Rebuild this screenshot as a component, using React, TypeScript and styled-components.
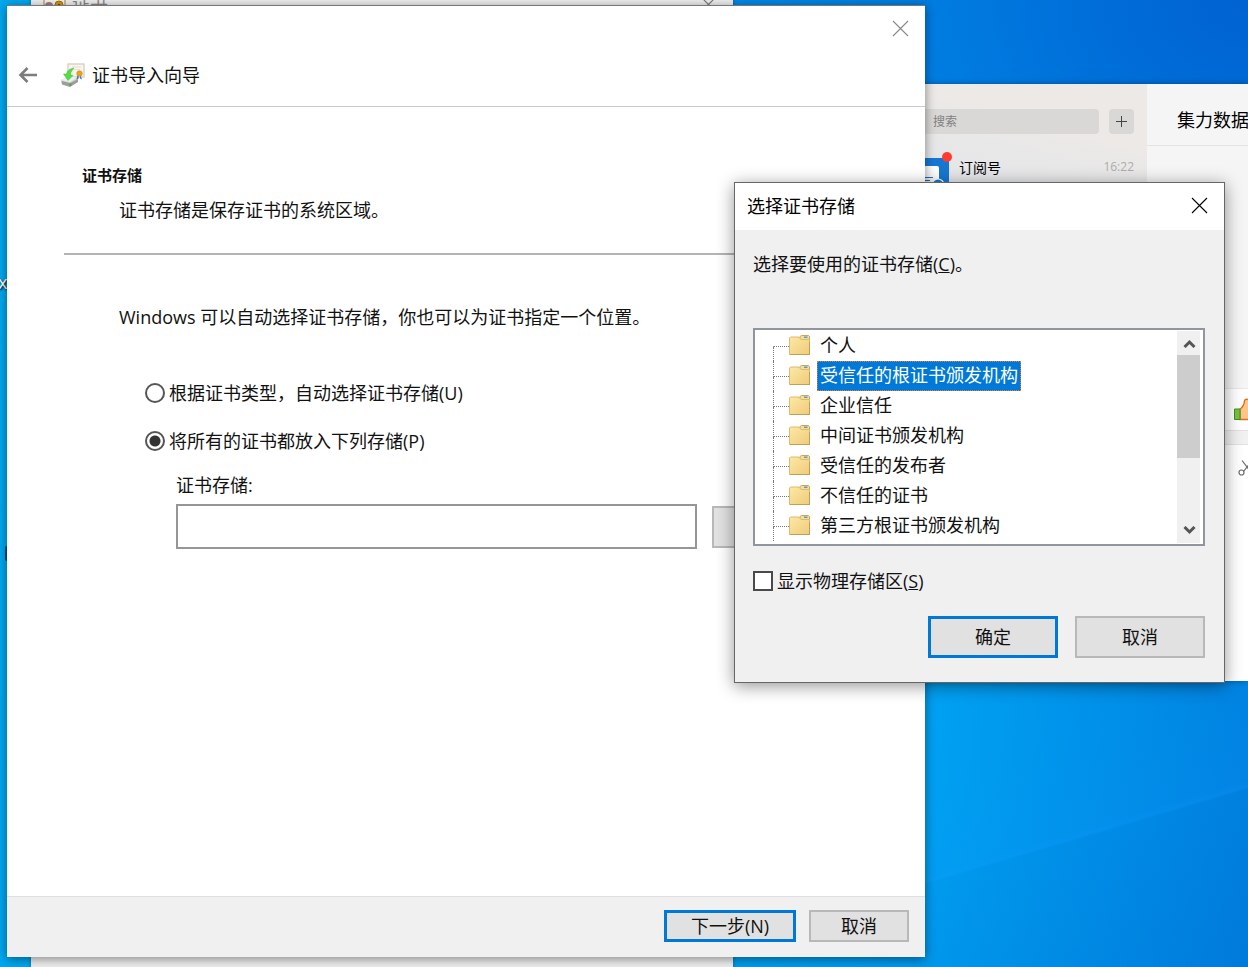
import React, { useState } from "react";
import styled, { createGlobalStyle } from "styled-components";

const GlobalStyle = createGlobalStyle`
  *, *::before, *::after { box-sizing: border-box; }
  body { margin: 0; overflow: hidden; }
  svg { flex: none; }
  body, button, input {
    font-family: "Open Sans", "Noto Sans CJK SC", sans-serif;
    font-size: 18px;
    line-height: 24px;
    color: #111;
  }
`;

/* ---------- shared parts ---------- */

const Desktop = styled.main`
  position: relative;
  min-height: 100vh;
  overflow: hidden;
  background:
    linear-gradient(163.5deg, transparent 0 80%, rgba(20, 145, 250, 0.1) 86%, rgba(20, 150, 255, 0.25) 86.5%, rgba(0, 100, 200, 0.08) 86.7%, rgba(0, 90, 190, 0.16) 100%),
    radial-gradient(ellipse 900px 600px at 100% 0%, rgba(0, 94, 206, 0.9) 0, rgba(0, 104, 216, 0.6) 40%, rgba(0, 110, 220, 0) 100%),
    linear-gradient(96deg, #00a8f0 0%, #00a4f2 60%, #00a0f2 75%, #0080e0 100%);
`;

const IconButton = styled.button<{ $size?: number }>`
  display: flex;
  align-items: center;
  justify-content: center;
  width: ${(p) => p.$size ?? 24}px;
  height: ${(p) => p.$size ?? 24}px;
  padding: 0;
  border: 0;
  background: none;
`;

const PushButton = styled.button<{ $primary?: boolean; $width: number; $tall?: boolean }>`
  flex: none;
  width: ${(p) => p.$width}px;
  height: ${(p) => (p.$tall ? 42 : 32)}px;
  padding: 0 0 1px;
  border: ${(p) => (p.$primary ? "3px solid #0078d7" : "2px solid #b8b8b8")};
  background: #e1e1e1;
`;

/* ---------- window behind the wizard ---------- */

const BackWindow = styled.section`
  position: absolute;
  top: -24px;
  bottom: -24px;
  left: 31px;
  right: 515px;
  display: flex;
  flex-direction: column;
  background: #efefef;
  box-shadow: 0 0 4px rgba(0, 0, 0, 0.3);
`;

const BackTitle = styled.header`
  display: flex;
  align-items: center;
  gap: 5px;
  height: 48px;
  padding: 8px 16px 0 12px;
  color: #888;
`;

const Grow = styled.span`
  flex: 1;
`;

/* ---------- chat window ---------- */

const ChatWindow = styled.section`
  position: absolute;
  top: 84px;
  left: calc(100% - 388px);
  right: 0;
  height: 597px;
  display: flex;
  box-shadow: 0 0 6px rgba(0, 0, 0, 0.35);
`;

const ChatList = styled.div`
  flex: none;
  width: 287px;
  padding: 25px 13px 0 12px;
  background: linear-gradient(15deg, #e4e6e9 0 78%, #ece9e7 90%);
`;

const SearchRow = styled.div`
  display: flex;
  gap: 10px;
`;

const SearchBox = styled.label`
  flex: 1;
  display: flex;
  align-items: center;
  gap: 8px;
  min-width: 0;
  height: 25px;
  padding-left: 39px;
  border-radius: 4px;
  background: #dad8d7;
`;

const SearchInput = styled.input`
  flex: 1;
  min-width: 0;
  padding: 0;
  border: 0;
  background: none;
  font-size: 12px;
  outline: 0;
  &::placeholder { color: #808080; opacity: 1; }
`;

const AddButton = styled(IconButton)`
  border-radius: 4px;
  background: #dad8d7;
`;

const ChatItem = styled.div`
  display: flex;
  align-items: flex-start;
  gap: 10px;
  margin-top: 24px;
  padding-left: 37px;
`;

const Avatar = styled.span`
  position: relative;
  width: 40px;
  height: 40px;
  background: #1677d3;
`;

const Badge = styled.i`
  position: absolute;
  top: -6px;
  right: -3px;
  width: 10px;
  height: 10px;
  border-radius: 50%;
  background: #ff3b30;
`;

const ChatName = styled.span`
  flex: 1;
  font-size: 14px;
  line-height: 20px;
  color: #000;
`;

const ChatTime = styled.time`
  font-size: 12px;
  line-height: 18px;
  color: #acacac;
`;

const ChatPane = styled.div`
  flex: 1;
  display: flex;
  flex-direction: column;
  min-width: 0;
  overflow: hidden;
  background: #f5f5f5;
`;

const ChatTitle = styled.h2`
  margin: 0;
  height: 62px;
  padding: 24px 0 0 30px;
  border-bottom: 1px solid #e3e3e3;
  font-size: 18px;
  line-height: 24px;
  font-weight: 400;
  white-space: nowrap;
  color: #000;
`;

const Messages = styled.div`
  height: 243px;
  border-bottom: 1px solid #e8e8e8;
`;

const EmojiBar = styled.div`
  display: flex;
  align-items: center;
  height: 41px;
  padding-left: 87px;
  background: #fff;
`;

const PaneGap = styled.div`
  height: 15px;
  border: solid #e2e2e2;
  border-width: 1px 0;
  background: #f1f1f1;
`;

const Composer = styled.div`
  flex: 1;
  padding: 13px 0 0 91px;
  background: #fff;
`;

/* ---------- import wizard ---------- */

const WizardWindow = styled.section`
  position: absolute;
  top: 5px;
  bottom: 10px;
  left: 7px;
  right: 323px;
  display: flex;
  flex-direction: column;
  border: solid #777;
  border-width: 1px 0 0;
  background: #fff;
  box-shadow: 0 2px 10px rgba(0, 0, 0, 0.45);
`;

const WizardCaption = styled.div`
  display: flex;
  justify-content: flex-end;
  padding: 10px 13px 0;
`;

const WizardHeader = styled.header`
  display: flex;
  align-items: center;
  height: 67px;
  padding: 3px 9px 0;
  border-bottom: 1px solid #ccc;
`;

const HeaderIcon = styled.span`
  display: flex;
  margin-left: 20px;
`;

const WizardTitle = styled.h1`
  margin: 0 0 0 6px;
  font-size: 18px;
  font-weight: 400;
`;

const WizardBody = styled.div`
  flex: 1;
  padding: 56px 57px 0;
`;

const StepTitle = styled.h2`
  margin: 0 18px 11px;
  font-size: 15px;
  font-weight: 700;
`;

const StepText = styled.p`
  margin: 0 55px;
`;

const Rule = styled.hr`
  height: 2px;
  margin: 31px 0 50px;
  border: 0;
  background: #b4b4b4;
`;

const Choices = styled.fieldset`
  display: flex;
  flex-direction: column;
  gap: 24px;
  margin: 52px 0 0 81px;
  padding: 0;
  border: 0;
`;

const Choice = styled.label`
  display: flex;
  align-items: center;
  gap: 4px;
`;

const Radio = styled.input`
  appearance: none;
  width: 20px;
  height: 20px;
  margin: 0;
  border: 2px solid #555;
  border-radius: 50%;
  background: #fff;
  &:checked { background: radial-gradient(circle, #333 5px, #fff 6px); }
`;

const StoreField = styled.div`
  margin: 20px 26px 0 112px;
`;

const StoreRow = styled.div`
  display: flex;
  align-items: center;
  gap: 15px;
  margin-top: 7px;
`;

const StoreInput = styled.input`
  flex: 1;
  min-width: 0;
  height: 45px;
  padding: 0 8px;
  border: 2px solid #969696;
  background: #fff;
`;

const WizardFooter = styled.footer`
  display: flex;
  justify-content: flex-end;
  gap: 13px;
  padding: 13px 16px 15px;
  border-top: 1px solid #dfdfdf;
  background: #f0f0f0;
`;

/* ---------- store picker dialog ---------- */

const PickerWindow = styled.section`
  position: absolute;
  top: 182px;
  right: 23px;
  width: 491px;
  border: 1px solid #666;
  background: #f0f0f0;
  box-shadow: 0 3px 16px rgba(0, 0, 0, 0.42);
`;

const PickerTitleBar = styled.header`
  display: flex;
  align-items: center;
  justify-content: space-between;
  height: 47px;
  padding: 0 13px 2px 12px;
  background: #fff;
`;

const PickerTitle = styled.h2`
  margin: 0;
  font-size: 18px;
  font-weight: 400;
  color: #000;
`;

const PickerBody = styled.div`
  padding: 22px 19px 24px 18px;
`;

const Prompt = styled.p`
  margin: 0 0 52px;
`;

const TreeBox = styled.div`
  display: flex;
  height: 218px;
  border: 2px solid #9095a0;
  background: #fff;
`;

const Tree = styled.ul`
  flex: 1;
  margin: 0;
  padding: 1px 0 0 18px;
  list-style: none;
`;

const TreeItem = styled.li`
  display: flex;
  align-items: center;
  height: 30px;
  cursor: default;
`;

const Branch = styled.span<{ $first: boolean }>`
  align-self: stretch;
  display: flex;
  flex-direction: column;
  width: 16px;
  &::before, &::after {
    content: "";
    flex: 1;
    border-left: 1px dotted #777;
  }
  &::before {
    border-bottom: 1px dotted #777;
    border-left-color: ${(p) => (p.$first ? "transparent" : "#777")};
  }
`;

const TreeLabel = styled.span<{ $selected: boolean }>`
  margin-left: 6px;
  padding: 1px 2px 3px;
  border: 1px dotted ${(p) => (p.$selected ? "#e08030" : "transparent")};
  background: ${(p) => (p.$selected ? "#0078d7" : "transparent")};
  color: ${(p) => (p.$selected ? "#fff" : "inherit")};
`;

const ScrollTrack = styled.div`
  display: flex;
  flex-direction: column;
  width: 23px;
  margin: 1px 3px 1px 0;
  background: #f0f0f0;
`;

const ScrollThumb = styled.div`
  height: 103px;
  background: #cdcdcd;
`;

const CheckRow = styled.label`
  display: flex;
  align-items: center;
  gap: 4px;
  margin-top: 23px;
`;

const CheckBox = styled.input`
  appearance: none;
  width: 20px;
  height: 20px;
  margin: 0;
  border: 2px solid #4a4a4a;
  background: #fff;
  &:checked { background: #0078d7; }
`;

const PickerActions = styled.div`
  display: flex;
  justify-content: flex-end;
  gap: 17px;
  margin-top: 23px;
`;

/* ---------- items at the desktop's left edge ---------- */

const DesktopLabel = styled.span`
  position: absolute;
  top: 270px;
  left: -2px;
  color: #fff;
  text-shadow: 1px 1px 2px #000;
`;

const DesktopIconEdge = styled.span`
  position: absolute;
  top: 546px;
  left: 5px;
  width: 20px;
  height: 15px;
  border-radius: 2px;
  background: #06478f;
`;

/* ---------- drawings ---------- */

const CrossIcon = ({ color }: { color: string }) => (
  <svg width="17" height="17" viewBox="0 0 17 17" aria-hidden="true">
    <path d="M1 1 L16 16 M16 1 L1 16" stroke={color} strokeWidth="1.1" fill="none" />
  </svg>
);

const BackArrow = () => (
  <svg width="22" height="20" viewBox="0 0 22 20" aria-hidden="true">
    <path d="M20 10 H4 M10.5 3 L3.5 10 L10.5 17" stroke="#7d7d7d" strokeWidth="2.6" fill="none" />
  </svg>
);

const ImportIcon = () => (
  <svg width="26" height="26" viewBox="0 0 26 26" aria-hidden="true">
    <rect x="8" y="2" width="16" height="13" fill="#f8f5ee" stroke="#ddd0bf" strokeWidth="1.4" />
    <path d="M12 5 H21 M12 7.500 H20" stroke="#e4e1dc" strokeWidth="1" />
    <path d="M1 18 L8 14.500 L17 15.500 L18 19 L10 24 L2 22 Z" fill="#d5d5d5" />
    <path d="M1 18 L8 14.500 L17 15.500 L10 20 Z" fill="#efefef" />
    <path d="M1.500 19 L10 21 L18 17 V20 L10 25 L2 22.500 Z" fill="#9d9d9d" />
    <circle cx="10.500" cy="22.800" r="1.200" fill="#38b83d" />
    <path d="M14 6 C9 7 7 9 6.500 12 L3.500 12 L8 18.500 L13 13.500 L10.500 13 C10.500 10 12 8 14 6 Z" fill="#55dd45" stroke="#43b83a" strokeWidth="0.5" />
    <path d="M17.500 13 L16.500 17.500 L18.700 16.500 V13 M20.500 13 L22 17.500 L20 16.500 V13" fill="#3c72e0" />
    <circle cx="19.500" cy="11.500" r="2.800" fill="#e6a320" stroke="#c98710" strokeWidth="0.5" />
  </svg>
);

const CertificateIcon = () => (
  <svg width="24" height="20" viewBox="0 0 24 20" aria-hidden="true">
    <rect x="1" y="1" width="21" height="16" fill="#f7f2ea" stroke="#c9b9a2" strokeWidth="2" />
    <circle cx="6" cy="12" r="4" fill="#9a7f80" />
    <circle cx="16" cy="11" r="4" fill="#d79a12" stroke="#9c6f0c" />
    <circle cx="16" cy="11" r="1.200" fill="#6d4d08" />
  </svg>
);

const FolderIcon = () => (
  <svg width="22" height="22" viewBox="0 0 22 22" aria-hidden="true">
    <defs>
      <linearGradient id="folder" x1="0" y1="0" x2="1" y2="1">
        <stop offset="0" stopColor="#fde9a6" />
        <stop offset="1" stopColor="#efcb79" />
      </linearGradient>
    </defs>
    <path d="M11 1.500 L12.500 0.500 H19.500 L20.500 1.500 V7 H11 Z" fill="#f4dc9a" stroke="#c9a65a" />
    <rect x="15" y="1.500" width="3.500" height="1.500" fill="#5b9bd0" />
    <path d="M0.500 3 L1.500 2 H10 L12 4.500 H20.500 V19.500 H0.500 Z" fill="url(#folder)" stroke="#dcba6e" />
    <path d="M1 19.500 H21 M20.500 7 V19" stroke="#c39f53" strokeWidth="1" />
  </svg>
);

const Chevron = ({ up }: { up?: boolean }) => (
  <svg width="13" height="10" viewBox="0 0 13 10" aria-hidden="true">
    <path d={up ? "M1.500 9 L6.500 4 L11.500 9" : "M1.500 1 L6.500 6 L11.500 1"} stroke="#555" strokeWidth="3" fill="none" />
  </svg>
);

const PlusIcon = () => (
  <svg width="13" height="13" viewBox="0 0 13 13" aria-hidden="true">
    <path d="M6.500 1 V12 M1 6.500 H12" stroke="#444" strokeWidth="1" />
  </svg>
);

const MagnifierIcon = () => (
  <svg width="14" height="14" viewBox="0 0 14 14" aria-hidden="true">
    <circle cx="6" cy="6" r="4" stroke="#8c8c8c" fill="none" />
    <path d="M9 9 L13.500 13.500" stroke="#8c8c8c" />
  </svg>
);

const NewsIcon = () => (
  <svg width="40" height="40" viewBox="0 0 40 40" aria-hidden="true">
    <rect x="7" y="8" width="23" height="24" rx="2" fill="#fff" />
    <path d="M11 19.500 H24 M11 22.500 H21 M11 25.500 H18" stroke="#1677d3" strokeWidth="1.200" />
    <circle cx="29" cy="27" r="6" fill="#1677d3" stroke="#fff" strokeWidth="1.200" />
  </svg>
);

const ThumbIcon = () => (
  <svg width="28" height="24" viewBox="0 0 28 24" aria-hidden="true">
    <path d="M6 11 C9 9.500 10.500 5 10.500 2.500 C11.500 0.500 15.500 1 15.500 4 L15 8.500 H24 C27 9.500 26.500 13 25 14 C26 16 25 17.500 24 18 C24 21 22 21.500 20 21.500 H6 Z" fill="#ffc58a" stroke="#d9711c" strokeWidth="1.300" />
    <path d="M0.500 11 H6 V21.500 H0.500 Z" fill="#78c23f" stroke="#3f8f20" />
  </svg>
);

const ScissorsIcon = () => (
  <svg width="18" height="18" viewBox="0 0 18 18" aria-hidden="true">
    <path d="M4 1.500 L12.500 12.500 M14 1.500 L5.500 12.500" stroke="#6c6c6c" strokeWidth="1.200" fill="none" />
    <circle cx="3.500" cy="13.500" r="2.500" stroke="#6c6c6c" strokeWidth="1.200" fill="none" />
    <circle cx="14.500" cy="13.500" r="2.500" stroke="#6c6c6c" strokeWidth="1.200" fill="none" />
  </svg>
);

const stores = [
  "个人",
  "受信任的根证书颁发机构",
  "企业信任",
  "中间证书颁发机构",
  "受信任的发布者",
  "不信任的证书",
  "第三方根证书颁发机构",
];

export default function App() {
  const [mode, setMode] = useState("manual");
  const [selected, setSelected] = useState(1);

  return (
    <Desktop lang="zh-CN">
      <GlobalStyle />
      <DesktopLabel>x</DesktopLabel>
      <DesktopIconEdge />

      <BackWindow>
        <BackTitle>
          <CertificateIcon />
          <span>证书</span>
          <Grow />
          <CrossIcon color="#777" />
        </BackTitle>
      </BackWindow>

      <ChatWindow>
        <ChatList>
          <SearchRow>
            <SearchBox>
              <MagnifierIcon />
              <SearchInput type="text" placeholder="搜索" aria-label="搜索" />
            </SearchBox>
            <AddButton type="button" $size={25} aria-label="添加">
              <PlusIcon />
            </AddButton>
          </SearchRow>
          <ChatItem>
            <Avatar>
              <NewsIcon />
              <Badge />
            </Avatar>
            <ChatName>订阅号</ChatName>
            <ChatTime>16:22</ChatTime>
          </ChatItem>
        </ChatList>
        <ChatPane>
          <ChatTitle>集力数据</ChatTitle>
          <Messages />
          <EmojiBar>
            <ThumbIcon />
          </EmojiBar>
          <PaneGap />
          <Composer>
            <ScissorsIcon />
          </Composer>
        </ChatPane>
      </ChatWindow>

      <WizardWindow>
        <WizardCaption>
          <IconButton type="button" aria-label="关闭">
            <CrossIcon color="#888" />
          </IconButton>
        </WizardCaption>
        <WizardHeader>
          <IconButton type="button" aria-label="返回">
            <BackArrow />
          </IconButton>
          <HeaderIcon>
            <ImportIcon />
          </HeaderIcon>
          <WizardTitle>证书导入向导</WizardTitle>
        </WizardHeader>
        <WizardBody>
          <StepTitle>证书存储</StepTitle>
          <StepText>证书存储是保存证书的系统区域。</StepText>
          <Rule />
          <StepText>Windows 可以自动选择证书存储，你也可以为证书指定一个位置。</StepText>
          <Choices>
            <Choice>
              <Radio type="radio" name="mode" checked={mode === "auto"} onChange={() => setMode("auto")} />
              根据证书类型，自动选择证书存储(U)
            </Choice>
            <Choice>
              <Radio type="radio" name="mode" checked={mode === "manual"} onChange={() => setMode("manual")} />
              将所有的证书都放入下列存储(P)
            </Choice>
          </Choices>
          <StoreField>
            <label htmlFor="store">证书存储:</label>
            <StoreRow>
              <StoreInput id="store" type="text" />
              <PushButton type="button" $width={130} $tall aria-label="浏览" />
            </StoreRow>
          </StoreField>
        </WizardBody>
        <WizardFooter>
          <PushButton type="button" $primary $width={132}>下一步(N)</PushButton>
          <PushButton type="button" $width={100}>取消</PushButton>
        </WizardFooter>
      </WizardWindow>

      <PickerWindow role="dialog" aria-labelledby="picker-title">
        <PickerTitleBar>
          <PickerTitle id="picker-title">选择证书存储</PickerTitle>
          <IconButton type="button" aria-label="关闭">
            <CrossIcon color="#000" />
          </IconButton>
        </PickerTitleBar>
        <PickerBody>
          <Prompt>选择要使用的证书存储(<u>C</u>)。</Prompt>
          <TreeBox>
            <Tree role="tree">
              {stores.map((name, i) => (
                <TreeItem key={name} role="treeitem" aria-selected={i === selected} onClick={() => setSelected(i)}>
                  <Branch $first={i === 0} />
                  <FolderIcon />
                  <TreeLabel $selected={i === selected}>{name}</TreeLabel>
                </TreeItem>
              ))}
            </Tree>
            <ScrollTrack>
              <IconButton type="button" aria-label="向上">
                <Chevron up />
              </IconButton>
              <ScrollThumb />
              <Grow />
              <IconButton type="button" aria-label="向下">
                <Chevron />
              </IconButton>
            </ScrollTrack>
          </TreeBox>
          <CheckRow>
            <CheckBox type="checkbox" />
            <span>显示物理存储区(<u>S</u>)</span>
          </CheckRow>
          <PickerActions>
            <PushButton type="button" $primary $tall $width={130}>确定</PushButton>
            <PushButton type="button" $tall $width={130}>取消</PushButton>
          </PickerActions>
        </PickerBody>
      </PickerWindow>
    </Desktop>
  );
}
